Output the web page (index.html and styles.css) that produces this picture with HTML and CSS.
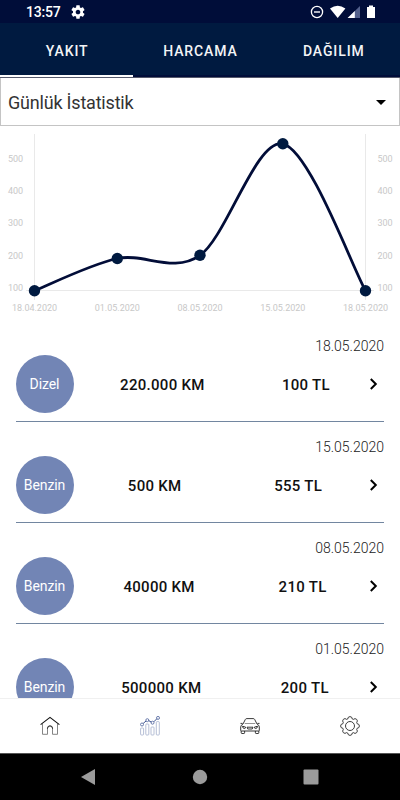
FILE: index.html
```html
<!DOCTYPE html>
<html lang="tr">
<head>
  <meta charset="utf-8">
  <title>Yakıt</title>
  <link rel="stylesheet" href="styles.css">
</head>
<body>
  <div class="status-bar">
    <span class="clock">13:57</span>
    <svg class="gear" width="16" height="16" viewBox="0 0 24 24"><path fill="#fff" d="M19.43 12.98c.04-.32.07-.64.07-.98s-.03-.66-.07-.98l2.11-1.65c.19-.15.24-.42.12-.64l-2-3.46c-.12-.22-.39-.3-.61-.22l-2.49 1c-.52-.4-1.08-.73-1.69-.98l-.38-2.65C14.46 2.18 14.25 2 14 2h-4c-.25 0-.46.18-.49.42l-.38 2.65c-.61.25-1.17.59-1.69.98l-2.49-1c-.23-.09-.49 0-.61.22l-2 3.46c-.13.22-.07.49.12.64l2.11 1.65c-.04.32-.07.65-.07.98s.03.66.07.98l-2.11 1.65c-.19.15-.24.42-.12.64l2 3.46c.12.22.39.3.61.22l2.49-1c.52.4 1.08.73 1.69.98l.38 2.65c.03.24.24.42.49.42h4c.25 0 .46-.18.49-.42l.38-2.65c.61-.25 1.17-.59 1.69-.98l2.49 1c.23.09.49 0 .61-.22l2-3.46c.12-.22.07-.49-.12-.64l-2.11-1.65zM12 15.5c-1.93 0-3.5-1.57-3.5-3.5s1.57-3.5 3.5-3.5 3.5 1.57 3.5 3.5-1.57 3.5-3.5 3.5z"/></svg>
    <svg class="signals" width="68" height="16" viewBox="0 0 68 16">
      <circle cx="7" cy="8" r="5.6" fill="none" stroke="#fff" stroke-width="1.3"/>
      <path d="M4 8h6" stroke="#fff" stroke-width="1.4"/>
      <path d="M20 4.6Q27.7-1 35.4 4.6L27.7 14z" fill="#fff"/>
      <path d="M37.6 14L50 2v12z" fill="#53608b"/>
      <path d="M37.6 14L44.8 7v7z" fill="#fff"/>
      <path d="M57 3h2V1.5h4V3h2v11h-8z" fill="#fff"/>
    </svg>
  </div>

  <div class="tabs">
    <div class="tab active">YAKIT</div>
    <div class="tab">HARCAMA</div>
    <div class="tab">DAĞILIM</div>
  </div>

  <div class="select">
    <span>Günlük İstatistik</span>
    <span class="caret"></span>
  </div>

  <svg class="chart" width="400" height="195" viewBox="0 126 400 195">
    <g stroke="#e9e9e9" stroke-width="1">
      <path d="M34.5 134v166M365.5 134v166M26 290.5h348"/>
    </g>
    <g class="axis">
      <text x="8" y="161.5">500</text>
      <text x="8" y="193.8">400</text>
      <text x="8" y="226.2">300</text>
      <text x="8" y="258.6">200</text>
      <text x="8" y="291">100</text>
      <text x="377.5" y="161.5">500</text>
      <text x="377.5" y="193.8">400</text>
      <text x="377.5" y="226.2">300</text>
      <text x="377.5" y="258.6">200</text>
      <text x="377.5" y="291">100</text>
    </g>
    <g class="axis dates">
      <text x="34.5" y="311">18.04.2020</text>
      <text x="117.3" y="311">01.05.2020</text>
      <text x="200" y="311">08.05.2020</text>
      <text x="282.8" y="311">15.05.2020</text>
      <text x="365.5" y="311">18.05.2020</text>
    </g>
    <path fill="none" stroke="#020d38" stroke-width="2.8" d="M34.5 290.7C47.7 285.5 90.8 264.2 117.3 258.5C143.8 252.8 173.5 273.8 200 255.3C226.5 237 256.3 138 282.8 143.8C309.3 149.4 352.2 267.2 365.5 290.7"/>
    <g fill="#001a40">
      <circle cx="34.5" cy="290.7" r="5.7"/>
      <circle cx="117.3" cy="258.5" r="5.7"/>
      <circle cx="200" cy="255.3" r="5.7"/>
      <circle cx="282.8" cy="143.8" r="5.7"/>
      <circle cx="365.5" cy="290.7" r="5.7"/>
    </g>
  </svg>

  <div class="list">
    <div class="row">
      <div class="date">18.05.2020</div>
      <div class="entry">
        <div class="badge">Dizel</div>
        <div class="values"><span>220.000 KM</span><span>100 TL</span></div>
        <svg class="chevron" width="10" height="14" viewBox="0 0 10 14"><path d="M1.8 2l5 5-5 5"/></svg>
      </div>
    </div>
    <div class="row">
      <div class="date">15.05.2020</div>
      <div class="entry">
        <div class="badge">Benzin</div>
        <div class="values"><span>500 KM</span><span>555 TL</span></div>
        <svg class="chevron" width="10" height="14" viewBox="0 0 10 14"><path d="M1.8 2l5 5-5 5"/></svg>
      </div>
    </div>
    <div class="row">
      <div class="date">08.05.2020</div>
      <div class="entry">
        <div class="badge">Benzin</div>
        <div class="values"><span>40000 KM</span><span>210 TL</span></div>
        <svg class="chevron" width="10" height="14" viewBox="0 0 10 14"><path d="M1.8 2l5 5-5 5"/></svg>
      </div>
    </div>
    <div class="row">
      <div class="date">01.05.2020</div>
      <div class="entry">
        <div class="badge">Benzin</div>
        <div class="values"><span>500000 KM</span><span>200 TL</span></div>
        <svg class="chevron" width="10" height="14" viewBox="0 0 10 14"><path d="M1.8 2l5 5-5 5"/></svg>
      </div>
    </div>
  </div>

  <div class="bottom-nav">
    <div class="nav-item">
      <svg width="20" height="20" viewBox="0 0 20 20" fill="none" stroke="#222" stroke-width=".9">
        <path d="M.6 8.6L10 1.4l9.4 7.2" stroke="#111" stroke-width="1.1"/>
        <path d="M2.5 8v10.3h5V12.5a2.5 2.5 0 0 1 5 0v5.8h5V8" stroke="#777"/>
        <path d="M7.5 13v-.7a2.5 2.5 0 0 1 5 0v.7"/>
      </svg>
    </div>
    <div class="nav-item">
      <svg width="20" height="20" viewBox="0 0 20 20" fill="none" stroke="#a3aecb" stroke-width=".8">
        <rect x=".6" y="12" width="3" height="7" rx=".8"/>
        <rect x="5.8" y="8" width="3" height="11" rx=".8"/>
        <rect x="11" y="11" width="3" height="8" rx=".8"/>
        <rect x="16.3" y="5.6" width="3" height="13.4" rx=".8"/>
        <path stroke="#3e5591" stroke-width="1" d="M3.2 7.4l3-2.5M8.5 4.5l3 1.7M13.8 5.8l3-3"/>
        <g stroke="#4a609b">
          <circle cx="2" cy="8.5" r="1.5"/>
          <circle cx="7.3" cy="4.2" r="1.5"/>
          <circle cx="12.5" cy="6.7" r="1.5"/>
          <circle cx="18" cy="1.9" r="1.5"/>
        </g>
      </svg>
    </div>
    <div class="nav-item">
      <svg width="20" height="20" viewBox="0 0 20 20" fill="none" stroke="#222" stroke-width=".9">
        <path d="M3 8l2.3-4.5q.4-.9 1.5-.9h6.4q1.1 0 1.5.9L17 8"/>
        <path d="M4.8 7.5h10.4" stroke="#888"/>
        <path d="M.5 7.4h2M17.5 7.4h2"/>
        <path d="M3 8Q.8 8.9.7 11v3.5q0 .5.6.5h17.4q.6 0 .6-.5V11q-.1-2.1-2.3-3"/>
        <path d="M1.2 15v1.8q0 .7.7.7h2q.7 0 .7-.7V15M15.4 15v1.8q0 .7.7.7h2q.7 0 .7-.7V15"/>
        <path d="M2.5 10.2l3.2 1q-.2 1.3-1.3 1.3-1.8 0-1.900-2.300zM17.500 10.200l-3.200 1q.2 1.300 1.300 1.300 1.800 0 1.900-2.300zM7 11.200h6l-.8 1.800H7.800z"/>
      </svg>
    </div>
    <div class="nav-item">
      <svg width="20" height="20" viewBox="0 0 20 20" fill="none" stroke="#333" stroke-width=".95">
        <circle cx="10" cy="10" r="4.5"/>
        <path d="M7.7 3Q7.9.6 10 .6t2.3 2.4l1 .4q1.8-1.5 3.3-.1t.1 3.400l.4 1q2.300.2 2.300 2.300t-2.300 2.300l-.4 1q1.400 1.900-.1 3.400t-3.300-.1l-1 .4q-.2 2.400-2.300 2.400T7.700 17l-1-.4q-1.800 1.500-3.300.1t-.1-3.400l-.4-1Q.6 12.100.6 10t2.300-2.300l.4-1Q1.900 4.800 3.400 3.300t3.300.1z"/>
      </svg>
    </div>
  </div>

  <div class="system-nav">
    <svg width="16" height="18" viewBox="0 0 16 18"><path d="M15 1v16L1 9z"/></svg>
    <svg width="16" height="16" viewBox="0 0 16 16"><circle cx="8" cy="8" r="7.2"/></svg>
    <svg width="16" height="16" viewBox="0 0 16 16"><rect x=".5" y=".5" width="15" height="15" rx="1"/></svg>
  </div>
</body>
</html>
```

FILE: styles.css
```css
* { box-sizing: border-box; }
body { margin: 0; width: 400px; height: 800px; overflow: hidden; background: #fff; font-family: Roboto, sans-serif; display: flex; flex-direction: column; }
svg { display: block; flex: none; }

.status-bar { height: 23px; flex: none; background: #000d39; color: #fff; display: flex; align-items: center; padding: 1px 22px 0 26px; }
.clock { font-size: 14px; font-weight: 500; line-height: 22px; letter-spacing: -0.2px; }
.gear { margin-left: 9px; }
.signals { margin-left: auto; }

.tabs { height: 55px; flex: none; background: #001a40; border-bottom: 1px solid #55596b; display: grid; grid-template-columns: repeat(3, 1fr); }
.tab { color: #f3f4f6; font-size: 14px; font-weight: 500; letter-spacing: 0.9px; line-height: 56px; text-align: center; height: 54px; padding-left: 1px; border-bottom: 2px solid #000d39; }
.tab.active { border-bottom-color: #fff; }

.select { height: 48px; flex: none; border: 1px solid #c4c4c4; border-top: 0; display: flex; align-items: center; justify-content: space-between; padding: 2px 13px 0 7px; font-size: 18px; font-weight: 400; letter-spacing: -0.2px; color: #333; }
.caret { border: 5px solid transparent; border-top-color: #000; border-bottom: 0; margin-bottom: 1px; }

.axis { font-size: 9px; fill: #c8c8c8; }
.dates { text-anchor: middle; }

.list { flex: 1; min-height: 0; overflow: hidden; padding: 0 16px; }
.row { height: 101px; border-bottom: 1px solid #7286a0; padding-top: 17px; }
.date { font-size: 14px; font-weight: 300; line-height: 17px; text-align: right; color: #222; }
.entry { display: flex; align-items: center; height: 58px; }
.badge { width: 58px; height: 58px; flex: none; margin-left: -0.5px; border-radius: 50%; background: #7285b5; color: #fff; font-size: 14px; letter-spacing: -0.1px; line-height: 59px; text-align: center; }
.values { flex: 1; display: flex; justify-content: space-around; margin: 1px 0 0 8px; font-size: 15px; font-weight: 500; letter-spacing: 0.3px; color: #111; }
.chevron { margin-right: 5.5px; fill: none; stroke: #000; stroke-width: 2; }

.bottom-nav { height: 55px; flex: none; border-top: 1px solid #f0f0f0; display: grid; grid-template-columns: repeat(4, 1fr); }
.nav-item { display: flex; align-items: center; justify-content: center; }
.system-nav { height: 47px; flex: none; background: #000; border-top: 1px solid #555; display: flex; align-items: center; justify-content: space-between; padding: 0 81px 0 80px; fill: #9b9b9b; }
```
